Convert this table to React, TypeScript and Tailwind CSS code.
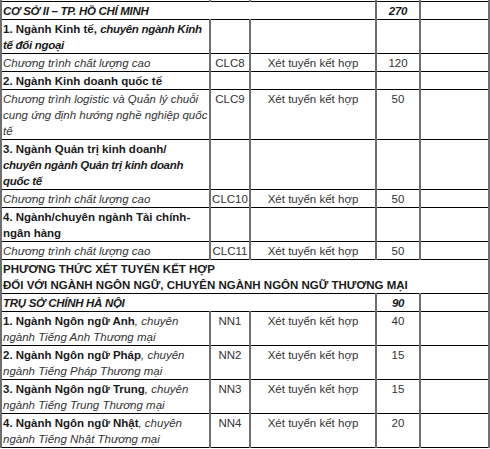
const td = "border-y border-y-black border-x-2 border-x-[#6f6f6f] align-top px-[1px] pt-[1px] pb-0";
const bi = "italic tracking-[-0.3px]";

type Row = {
  name: React.ReactNode;
  code?: string;
  method?: string;
  quota?: string;
};

const rows: Row[] = [
  {
    name: (
      <b className="text-[#1a1a1a]">
        1. Ngành Kinh tế, <i className={bi}>chuyên ngành Kinh tế đối ngoại</i>
      </b>
    ),
  },
  { name: <i>Chương trình chất lượng cao</i>, code: "CLC8", method: "Xét tuyển kết hợp", quota: "120" },
  { name: <b className="text-[#1a1a1a]">2. Ngành Kinh doanh quốc tế</b> },
  {
    name: <i>Chương trình logistic và Quản lý chuỗi cung ứng định hướng nghề nghiệp quốc tế</i>,
    code: "CLC9",
    method: "Xét tuyển kết hợp",
    quota: "50",
  },
  {
    name: (
      <b className="text-[#1a1a1a]">
        3. Ngành Quản trị kinh doanh/ <i className={bi}>chuyên ngành Quản trị kinh doanh quốc tế</i>
      </b>
    ),
  },
  { name: <i>Chương trình chất lượng cao</i>, code: "CLC10", method: "Xét tuyển kết hợp", quota: "50" },
  { name: <b className="text-[#1a1a1a]">4. Ngành/chuyên ngành Tài chính-ngân hàng</b> },
  { name: <i>Chương trình chất lượng cao</i>, code: "CLC11", method: "Xét tuyển kết hợp", quota: "50" },
];

const langRows = [
  { lang: "Anh", code: "NN1", quota: "40" },
  { lang: "Pháp", code: "NN2", quota: "15" },
  { lang: "Trung", code: "NN3", quota: "15" },
  { lang: "Nhật", code: "NN4", quota: "20" },
];

export default function App() {
  return (
    <div className="w-[490px] h-[449px] overflow-hidden bg-white">
      <table
        className="w-[488px] table-fixed border-collapse text-[11.5px] leading-[16px] text-[#333]"
        style={{ fontFamily: '"Liberation Sans", Arial, sans-serif' }}
      >
        <colgroup>
          <col className="w-[209px]" />
          <col className="w-[40px]" />
          <col className="w-[126px]" />
          <col className="w-[44px]" />
          <col className="w-[69px]" />
        </colgroup>
        <tbody>
          <tr className="h-[1px]">
            <td className="border-b border-b-black border-x-2 border-x-[#6f6f6f] p-0" />
            <td className="border-b border-b-black border-x-2 border-x-[#6f6f6f] p-0" />
            <td className="border-b border-b-black border-x-2 border-x-[#6f6f6f] p-0" />
            <td className="border-b border-b-black border-x-2 border-x-[#6f6f6f] p-0" />
            <td className="border-b border-b-black border-x-2 border-x-[#6f6f6f] p-0" />
          </tr>
          <tr>
            <td colSpan={3} className={td}>
              <b className={`${bi} text-[#1a1a1a]`}>CƠ SỞ II – TP. HỒ CHÍ MINH</b>
            </td>
            <td className={`${td} text-center`}>
              <b className={`${bi} text-[#1a1a1a]`}>270</b>
            </td>
            <td className={td} />
          </tr>
          {rows.map((r, i) => (
            <tr key={i}>
              <td className={td}>{r.name}</td>
              <td className={`${td} text-center`}>{r.code}</td>
              <td className={`${td} text-center`}>{r.method}</td>
              <td className={`${td} text-center`}>{r.quota}</td>
              <td className={td} />
            </tr>
          ))}
          <tr>
            <td colSpan={5} className={td}>
              <b className="text-[#1a1a1a]">
                PHƯƠNG THỨC XÉT TUYỂN KẾT HỢP
                <br />
                ĐỐI VỚI NGÀNH NGÔN NGỮ, CHUYÊN NGÀNH NGÔN NGỮ THƯƠNG MẠI
              </b>
            </td>
          </tr>
          <tr>
            <td colSpan={3} className={td}>
              <b className={`${bi} text-[#1a1a1a]`}>TRỤ SỞ CHÍNH HÀ NỘI</b>
            </td>
            <td className={`${td} text-center`}>
              <b className={`${bi} text-[#1a1a1a]`}>90</b>
            </td>
            <td className={td} />
          </tr>
          {langRows.map((r, i) => (
            <tr key={r.code}>
              <td className={td}>
                <b className="text-[#1a1a1a]">{`${i + 1}. Ngành Ngôn ngữ ${r.lang}`}</b>
                <i>, chuyên ngành Tiếng {r.lang} Thương mại</i>
              </td>
              <td className={`${td} text-center`}>{r.code}</td>
              <td className={`${td} text-center`}>Xét tuyển kết hợp</td>
              <td className={`${td} text-center`}>{r.quota}</td>
              <td className={td} />
            </tr>
          ))}
        </tbody>
      </table>
    </div>
  );
}
